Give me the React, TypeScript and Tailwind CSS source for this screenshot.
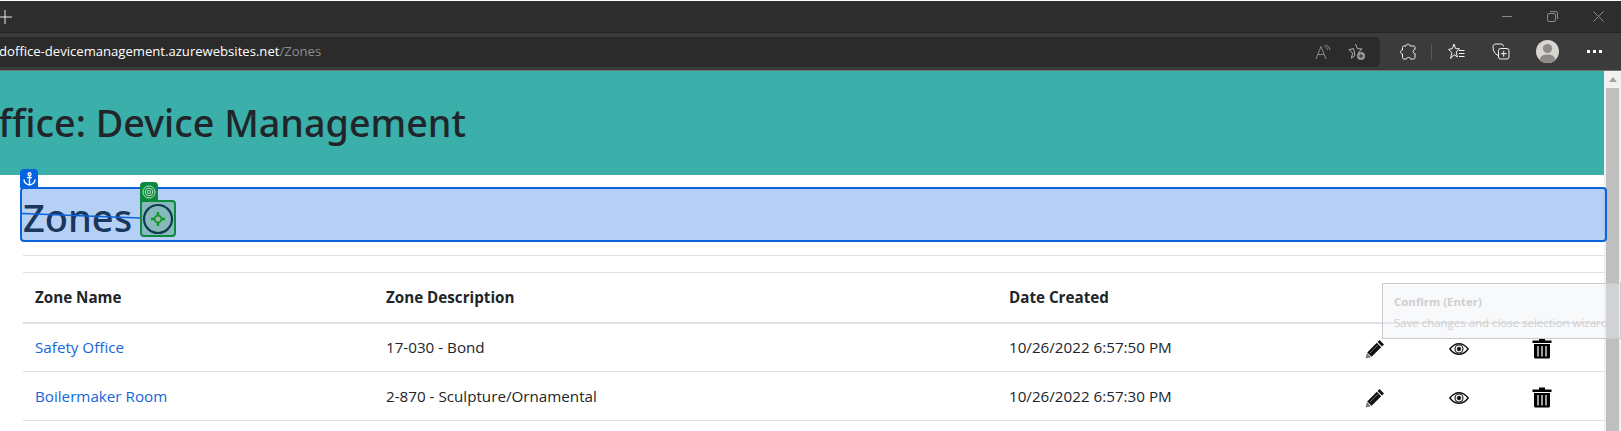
import React from 'react';

const zones = [
  { name: 'Safety Office', description: '17-030 - Bond', created: '10/26/2022 6:57:50 PM' },
  { name: 'Boilermaker Room', description: '2-870 - Sculpture/Ornamental', created: '10/26/2022 6:57:30 PM' },
];

const PencilIcon = () => (
  <svg width="20" height="20" viewBox="0 0 20 20" className="block">
    <path d="M14.5 1 L19 5.5 L17 7.5 L12.5 3 Z" fill="#111" />
    <path d="M11.8 3.8 L16.2 8.2 L6.6 17.8 L2.2 13.4 Z" fill="#111" />
    <path d="M1.8 14 L6 18.2 L0.6 19.6 Z" fill="#777" />
    <path d="M5 14 L12.8 6.2" stroke="#888" strokeWidth="0.8" />
  </svg>
);

const EyeIcon = () => (
  <svg width="20" height="12" viewBox="0 0 20 12" fill="none" stroke="#111" className="block">
    <path d="M0.8 6 C4 1.8 7 0.7 10 0.7 C13 0.7 16 1.8 19.2 6 C16 10.2 13 11.3 10 11.3 C7 11.3 4 10.2 0.8 6 Z" strokeWidth="1.4" />
    <circle cx="10" cy="6" r="4" strokeWidth="1.1" />
    <circle cx="10" cy="6" r="1.9" fill="#111" strokeWidth="0.6" />
  </svg>
);

const TrashIcon = () => (
  <svg width="20" height="21" viewBox="0 0 20 21" className="block">
    <path d="M7 0.5 H13 V2.5 H19.5 V5 H0.5 V2.5 H7 Z" fill="#000" />
    <path d="M2 6 H18 V19 Q18 20.5 16.5 20.5 H3.5 Q2 20.5 2 19 Z" fill="#000" />
    <path d="M6 8 V18.5 M10 8 V18.5 M14 8 V18.5" stroke="#c4c4c4" strokeWidth="1.6" />
  </svg>
);

const ReadAloudIcon = () => (
  <svg width="16" height="16" viewBox="0 0 16 16" fill="none" stroke="#8a8a8a" strokeWidth="1">
    <path d="M1 15 L6 2.5 L11 15 M3 10.5 H9" />
    <path d="M9 1.5 Q12 3 12.6 6 M11 0.8 Q14.5 2.5 15 6" />
  </svg>
);

const FavAddIcon = () => (
  <svg width="18" height="18" viewBox="0 0 18 18" fill="none">
    <path d="M7.5 1 L9.4 5.6 L14.2 6 L10.6 9.2 L11 11 M7 12.5 L3.4 15.2 L4.6 10.2 L1 6.6 L5.6 5.6 Z" stroke="#b0b0b0" />
    <circle cx="13" cy="13" r="4" fill="#9a9a9a" />
    <path d="M13 10.8 V15.2 M10.8 13 H15.2" stroke="#2b2b2b" />
  </svg>
);

const ExtensionIcon = () => (
  <svg width="16" height="17" viewBox="0 0 16 17" fill="none" stroke="#f2f2f2">
    <path d="M6 3 C6 0.5 10 0.5 10 3 H13.5 C14.5 3 15 3.5 15 4.5 V6.5 C12.5 6.5 12.5 10.5 15 10.5 V14.5 C15 15.5 14.5 16 13.5 16 H10.5 C10.5 13.8 6.5 13.8 6.5 16 H4 C3 16 2.5 15.5 2.5 14.5 V11 C0 11 0 7 2.5 7 V4.5 C2.5 3.5 3 3 4 3 Z" />
  </svg>
);

const FavoritesIcon = () => (
  <svg width="17" height="17" viewBox="0 0 17 17" fill="none" stroke="#f2f2f2">
    <path d="M6 1 L7.6 5.6 L11.6 5.8 L8.2 8.8 L9.4 14 L6 11.6 L2.6 15.6 L3.8 9.6 L0.6 6.4 L4.4 5.6 Z" />
    <path d="M11 7.5 H16.5 M11 10.5 H16.5 M11 13.5 H16.5" />
  </svg>
);

const CollectionsIcon = () => (
  <svg width="18" height="17" viewBox="0 0 18 17" fill="none" stroke="#f2f2f2">
    <path d="M6 12.5 C3 11 1 8 1 4 C1 2 2 1 4 1 H9 C10.5 1 11.5 2 11.5 3.5" />
    <rect x="6.5" y="5.5" width="10.5" height="10.5" rx="2" />
    <path d="M11.7 7.8 V13.7 M8.8 10.7 H14.7" />
  </svg>
);

const Avatar = () => (
  <svg width="23" height="23" viewBox="0 0 23 23">
    <circle cx="11.5" cy="11.5" r="11.5" fill="#d9d6d2" />
    <circle cx="11.5" cy="8.5" r="4.6" fill="#8e8a86" />
    <path d="M3.6 20 C4.5 15.6 8 14.6 11.5 14.6 C15 14.6 18.5 15.6 19.4 20 C17.4 22 14.5 23 11.5 23 C8.5 23 5.6 22 3.6 20 Z" fill="#8e8a86" />
  </svg>
);

const AnchorIcon = () => (
  <svg width="13" height="14" viewBox="0 0 13 14" fill="none" stroke="#fff" strokeWidth="1.4">
    <circle cx="6.5" cy="2.2" r="1.4" />
    <path d="M6.5 3.6 V13 M4 5.6 H9 M1 7.5 Q1.2 12 6.5 13 Q11.8 12 12 7.5" />
  </svg>
);

const TargetIcon = () => (
  <svg width="32" height="32" viewBox="0 0 32 32" fill="none">
    <circle cx="16" cy="16" r="14" stroke="#0f3a52" strokeWidth="2.2" />
    <path d="M16 9 V12.5 M16 19.5 V23 M9 16 H12.5 M19.5 16 H23" stroke="#0c9a26" strokeWidth="2.4" />
    <circle cx="16" cy="16" r="3.4" stroke="#0c9a26" strokeWidth="1.8" fill="#a4b8ae" />
  </svg>
);

const RingsIcon = () => (
  <svg width="14" height="14" viewBox="0 0 14 14" fill="none" stroke="#cfe6d6" strokeWidth="0.9">
    <circle cx="7" cy="7" r="6" />
    <circle cx="7" cy="7" r="3.8" />
    <circle cx="7" cy="7" r="1.6" />
  </svg>
);

export default function App() {
  return (
    <div className="relative h-[431px] w-[1621px] overflow-hidden bg-white font-['Open_Sans','Noto_Sans',sans-serif] text-[#212529]">
      {/* browser chrome */}
      <div className="h-px bg-white" />
      <div className="flex h-[31px] items-center justify-between bg-[#2e2e2e]">
        <svg width="12" height="14" viewBox="0 0 12 14" stroke="#e8e8e8" fill="none">
          <path d="M5 0 V14 M0 7 H12" />
        </svg>
        <div className="flex items-center gap-[35px] pr-[17px]">
          <div className="h-px w-[10px] bg-[#8a8a8a]" />
          <svg width="11" height="11" viewBox="0 0 11 11" fill="none" stroke="#8a8a8a">
            <rect x="0.5" y="2.5" width="8" height="8" rx="1.5" />
            <path d="M3 0.5 H9 Q10.5 0.5 10.5 2 V8" />
          </svg>
          <svg width="11" height="11" viewBox="0 0 11 11" stroke="#8a8a8a">
            <path d="M0.5 0.5 L10.5 10.5 M10.5 0.5 L0.5 10.5" />
          </svg>
        </div>
      </div>
      <div className="flex h-[38px] items-center border-t border-[#232323] bg-[#3b3b3b]">
        <div className="flex h-[30px] w-[1380px] items-center justify-between overflow-hidden rounded-r-[5px] bg-[#2b2b2b]">
          <span className="ml-[-1px] text-[13.1px] whitespace-nowrap text-white">
            doffice-devicemanagement.azurewebsites.net<span className="text-[#8d8d8d]">/Zones</span>
          </span>
          <div className="flex items-center gap-[17px] pr-[14px]">
            <ReadAloudIcon />
            <FavAddIcon />
          </div>
        </div>
        <div className="ml-[20px]">
          <ExtensionIcon />
        </div>
        <div className="ml-[15px] h-[16px] w-px bg-[#5a5a5a]" />
        <div className="ml-[16px]">
          <FavoritesIcon />
        </div>
        <div className="ml-[27px]">
          <CollectionsIcon />
        </div>
        <div className="ml-[26px]">
          <Avatar />
        </div>
        <div className="ml-[28px] flex gap-[3px]">
          <div className="h-[3px] w-[3px] bg-white" />
          <div className="h-[3px] w-[3px] bg-white" />
          <div className="h-[3px] w-[3px] bg-white" />
        </div>
      </div>
      <div className="h-px bg-[#6f7272]" />

      {/* page */}
      <div className="flex h-[360px]">
        <div className="w-[1604px] shrink-0 overflow-hidden">
          <div className="flex h-[104px] items-center bg-[#3bafa9]">
            <h1 className="ml-[-31px] font-['Noto_Sans',sans-serif] text-[37.7px] font-medium whitespace-nowrap">Office: Device Management</h1>
          </div>
          <div className="pl-[23px]">
            <h2 className="mt-[14px] h-[66px] font-['Noto_Sans',sans-serif] text-[38px] leading-[56px] font-medium">Zones</h2>
            <div className="h-[17px] border-t border-[#dee2e6]" />
            <table className="w-full table-fixed border-collapse text-[15.2px]">
              <colgroup>
                <col className="w-[351px]" />
                <col className="w-[623px]" />
                <col className="w-[340px]" />
                <col className="w-[76px]" />
                <col className="w-[92px]" />
                <col />
              </colgroup>
              <thead>
                <tr className="h-[50px] border-t border-b-2 border-t-[#dee2e6] border-b-[#dee2e6] text-left">
                  <th className="px-3 font-bold">Zone Name</th>
                  <th className="px-3 font-bold">Zone Description</th>
                  <th className="px-3 font-bold">Date Created</th>
                  <th />
                  <th />
                  <th />
                </tr>
              </thead>
              <tbody>
                {zones.map((zone) => (
                  <tr key={zone.name} className="h-[49px] border-b border-[#dee2e6]">
                    <td className="px-3 text-[#1666d8]">{zone.name}</td>
                    <td className="px-3">{zone.description}</td>
                    <td className="px-3">{zone.created}</td>
                    <td>
                      <div className="flex justify-center pt-[3px]">
                        <PencilIcon />
                      </div>
                    </td>
                    <td>
                      <div className="flex justify-center pt-[3px]">
                        <EyeIcon />
                      </div>
                    </td>
                    <td className="pr-[25px]">
                      <div className="flex justify-center pt-[3px]">
                        <TrashIcon />
                      </div>
                    </td>
                  </tr>
                ))}
              </tbody>
            </table>
          </div>
        </div>
        {/* scrollbar */}
        <div className="flex flex-1 flex-col items-center bg-[#f1f1f1]">
          <div className="mt-[6px] h-0 w-0 border-x-[4px] border-b-[5px] border-x-transparent border-b-[#a3a3a3]" />
          <div className="mt-[6px] h-full w-[13px] bg-[#bfbfbf]" />
        </div>
      </div>

      {/* selection wizard overlay */}
      <div className="absolute top-[187px] left-[20px] h-[55px] w-[1587px] rounded-[4px] border-2 border-[#0a64dc] bg-[#0a64dc]/30" />
      <div className="absolute top-[169px] left-[20px] flex h-[19px] w-[18px] items-center justify-center rounded-t-[4px] bg-[#0563e1]">
        <AnchorIcon />
      </div>
      <svg className="absolute top-[210px] left-[22px]" width="120" height="10" viewBox="0 0 120 10">
        <path d="M0 3.5 L118 8" stroke="#0a64dc" strokeWidth="1.6" />
      </svg>
      <div className="absolute top-[182px] left-[140px] flex h-[19px] w-[18px] items-center justify-center rounded-t-[4px] bg-[#0a8a3c]">
        <RingsIcon />
      </div>
      <div className="absolute top-[200px] left-[140px] flex h-[37px] w-[36px] items-center justify-center rounded-[4px] rounded-tl-none border-2 border-[#0a8a3c] bg-[#86b8bc]">
        <TargetIcon />
      </div>
      <div className="absolute top-[283px] left-[1382px] h-[56px] w-[239px] border border-[#c9c9c9] bg-[#eef0f5]/40 pt-[7px] pl-[11px] text-[11.45px] leading-[21px] whitespace-nowrap text-[#cfcfcf]">
        <div className="font-bold">Confirm (Enter)</div>
        <div>Save changes and close selection wizard.</div>
      </div>
    </div>
  );
}
